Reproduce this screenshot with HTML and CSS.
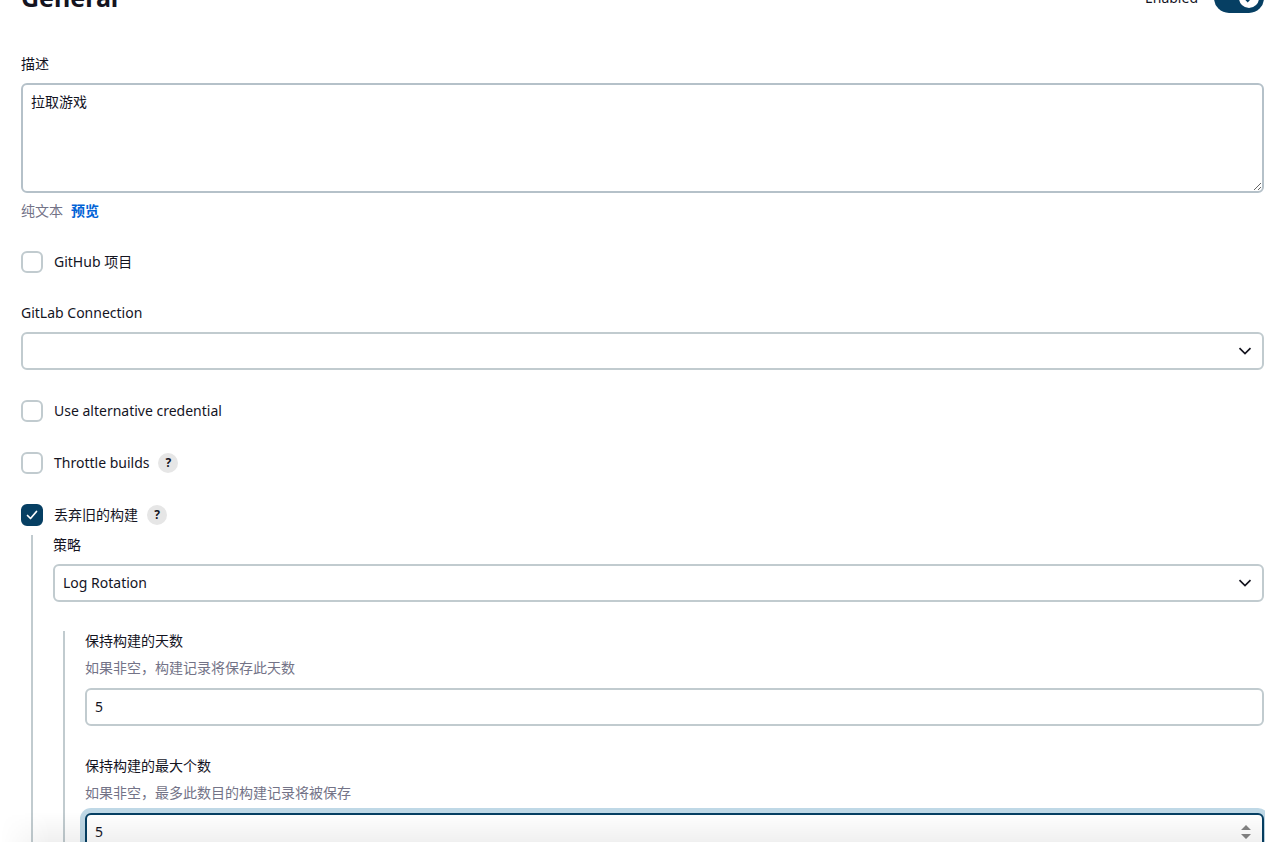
FILE: index.html
```html
<!DOCTYPE html>
<html lang="zh-CN">
<head>
<meta charset="utf-8">
<title>General</title>
<link rel="stylesheet" href="styles.css">
</head>
<body>
<form class="config">
  <header class="config-header">
    <h1 class="title">General</h1>
    <label class="toggle">
      <span>Enabled</span>
      <input class="toggle-input" type="checkbox" role="switch" checked>
      <span class="toggle-track"><span class="toggle-knob"><svg viewBox="0 0 20 20" width="20" height="20" aria-hidden="true"><path d="M6 10.200l2.700 2.800L14 7.300"/></svg></span></span>
    </label>
  </header>

  <div class="field">
    <label class="label" for="description">描述</label>
    <textarea class="control textarea" id="description">拉取游戏</textarea>
    <div class="format"><span>纯文本</span><a class="preview" href="#preview">预览</a></div>
  </div>

  <div class="option">
    <input class="checkbox" type="checkbox" id="github"><label for="github">GitHub 项目</label>
  </div>

  <div class="field">
    <label class="label" for="gitlab">GitLab Connection</label>
    <div class="select">
      <select class="control" id="gitlab"><option></option></select>
      <svg class="chevron" viewBox="0 0 14 8" aria-hidden="true"><path d="M1.500 1.200L7 6.600l5.500-5.400"/></svg>
    </div>
  </div>

  <div class="option">
    <input class="checkbox" type="checkbox" id="credential"><label for="credential">Use alternative credential</label>
  </div>

  <div class="option">
    <input class="checkbox" type="checkbox" id="throttle"><label for="throttle">Throttle builds</label>
    <button class="help" type="button">?</button>
  </div>

  <div class="group">
    <div class="option">
      <input class="checkbox" type="checkbox" id="discard" checked><label for="discard">丢弃旧的构建</label>
      <button class="help" type="button">?</button>
    </div>
    <div class="nested">
      <div class="field">
        <label class="label" for="strategy">策略</label>
        <div class="select">
          <select class="control" id="strategy"><option>Log Rotation</option></select>
          <svg class="chevron" viewBox="0 0 14 8" aria-hidden="true"><path d="M1.500 1.200L7 6.600l5.500-5.400"/></svg>
        </div>
      </div>
      <div class="nested">
        <div class="field">
          <label class="label" for="days">保持构建的天数</label>
          <p class="hint">如果非空，构建记录将保存此天数</p>
          <input class="control number" type="number" id="days" value="5">
        </div>
        <div class="field">
          <label class="label" for="count">保持构建的最大个数</label>
          <p class="hint">如果非空，最多此数目的构建记录将被保存</p>
          <div class="stepper">
            <input class="control number active" type="number" id="count" value="5">
            <svg class="arrows" viewBox="0 0 14 18" aria-hidden="true"><path d="M2 7l5-5 5 5zM2 11h10l-5 5z"/></svg>
          </div>
        </div>
      </div>
    </div>
  </div>
</form>
<div class="fade"></div>
</body>
</html>
```
FILE: styles.css
```css
* {
  box-sizing: border-box;
}

body {
  height: 100vh;
  margin: 0;
  overflow: hidden;
  background: #fff;
  color: #14141f;
  font: 14px/20px "Noto Sans", "Noto Sans CJK SC", sans-serif;
}

.config {
  display: flex;
  flex-direction: column;
  gap: 30px;
  padding: 0 1px 0 21px;
}

.config-header {
  display: flex;
  align-items: center;
  justify-content: space-between;
  height: 30px;
  margin: -17px 0 11px;
}

.title {
  margin: 0;
  padding-bottom: 2px;
  font-size: 25px;
  line-height: 28px;
}

.toggle {
  position: relative;
  display: flex;
  align-items: center;
  gap: 16px;
}

.toggle-input {
  position: absolute;
  opacity: 0;
}

.toggle-track {
  display: flex;
  justify-content: flex-end;
  width: 50px;
  height: 30px;
  padding: 5px;
  border-radius: 15px;
  background: #063f63;
}

.toggle-knob {
  width: 20px;
  height: 20px;
  border-radius: 50%;
  background: #fff;
}

.toggle-knob svg {
  display: block;
  fill: none;
  stroke: #063f63;
  stroke-width: 2;
}

.field {
  display: flex;
  flex-direction: column;
}

.label {
  margin-bottom: 9px;
}

.control {
  display: block;
  width: 100%;
  height: 38px;
  margin: 0;
  padding: 7px 8px;
  border: 2px solid #c1cbcf;
  border-radius: 6px;
  outline: none;
  background: #fff;
  color: inherit;
  font: inherit;
  appearance: none;
}

.control::-webkit-inner-spin-button {
  display: none;
}

.textarea {
  height: 110px;
  border-color: #b5c1c9;
}

.number {
  padding: 6px 8px 8px;
}

.active {
  border-color: #063f63;
  box-shadow: 0 0 0 5px #bfd8e6;
}

.format {
  display: flex;
  gap: 8px;
  margin-top: 8px;
  color: #737387;
}

.preview {
  color: #0062d6;
  font-weight: 700;
  text-decoration: none;
}

.option {
  display: flex;
  align-items: center;
  height: 22px;
}

.checkbox {
  width: 22px;
  height: 22px;
  margin: 0 11px 0 0;
  border: 2px solid #c1cbcf;
  border-radius: 6px;
  background: #fff;
  appearance: none;
}

.checkbox:checked {
  border-color: #063f63;
  background: #063f63 url("data:image/svg+xml,%3Csvg xmlns='http://www.w3.org/2000/svg' viewBox='0 0 18 18'%3E%3Cpath d='M4.500 9.500l3 3 6-7' fill='none' stroke='white' stroke-width='1.700' stroke-linecap='round' stroke-linejoin='round'/%3E%3C/svg%3E") center / 18px 18px no-repeat;
}

.help {
  width: 20px;
  height: 20px;
  margin: 0 0 0 9px;
  padding: 0;
  border: 0;
  border-radius: 50%;
  background: #e6e6e6;
  color: #14141f;
  font: 700 12px/20px "Noto Sans", sans-serif;
}

.select,
.stepper {
  position: relative;
}

.chevron {
  position: absolute;
  top: 15px;
  right: 12px;
  width: 14px;
  height: 8px;
  fill: none;
  stroke: #14141f;
  stroke-width: 1.7;
}

.arrows {
  position: absolute;
  top: 10px;
  right: 11px;
  width: 14px;
  height: 18px;
  fill: #858585;
}

.group {
  display: flex;
  flex-direction: column;
  gap: 9px;
}

.nested {
  display: flex;
  flex-direction: column;
  gap: 29px;
  padding-left: 20px;
  margin-left: 10px;
  border-left: 2px solid #c1cbcf;
}

.nested .nested {
  gap: 30px;
}

.hint {
  margin: -2px 0 10px;
  color: #737387;
}

.fade {
  position: fixed;
  right: 0;
  bottom: 0;
  left: 0;
  height: 30px;
  background: linear-gradient(rgba(0, 0, 0, 0), rgba(0, 0, 0, 0.06));
  mask-image: linear-gradient(to right, transparent, #000 50px);
  pointer-events: none;
}
```
